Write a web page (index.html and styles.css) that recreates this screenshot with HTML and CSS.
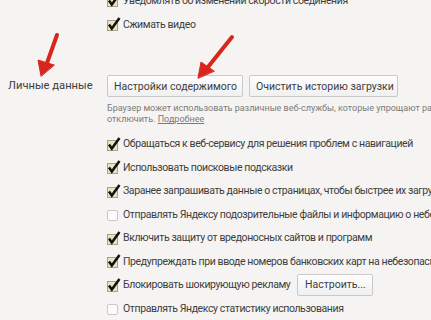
FILE: index.html
```html
<!DOCTYPE html>
<html lang="ru">
<head>
    <meta charset="UTF-8">
    <title>Настройки</title>
    <link rel="stylesheet" href="styles.css">
</head>
<body>
    <div class="page">
        <div class="section">
            <div class="label"></div>
            <div class="content">
                <div class="check-row"><span class="box checked"></span>Уведомлять об изменении скорости соединения</div>
                <div class="check-row"><span class="box checked"></span>Сжимать видео</div>
            </div>
        </div>

        <div class="section personal">
            <div class="label">Личные данные</div>
            <div class="content">
                <div class="buttons">
                    <button class="btn">Настройки содержимого</button>
                    <button class="btn">Очистить историю загрузки</button>
                </div>
                <p class="hint">Браузер может использовать различные веб-службы, которые упрощают работу в интернете. При желании эти службы можно<br>отключить. <a href="#">Подробнее</a></p>
                <div class="check-row"><span class="box checked"></span>Обращаться к веб-сервису для решения проблем с навигацией</div>
                <div class="check-row"><span class="box checked"></span>Использовать поисковые подсказки</div>
                <div class="check-row"><span class="box checked"></span>Заранее запрашивать данные о страницах, чтобы быстрее их загружать</div>
                <div class="check-row"><span class="box"></span>Отправлять Яндексу подозрительные файлы и информацию о небезопасных сайтах</div>
                <div class="check-row"><span class="box checked"></span>Включить защиту от вредоносных сайтов и программ</div>
                <div class="check-row"><span class="box checked"></span>Предупреждать при вводе номеров банковских карт на небезопасных сайтах</div>
                <div class="check-row"><span class="box checked"></span>Блокировать шокирующую рекламу <button class="btn small">Настроить...</button></div>
                <div class="check-row"><span class="box"></span>Отправлять Яндексу статистику использования</div>
            </div>
        </div>
    </div>

    <!-- красные стрелки поверх скриншота -->
    <svg class="arrows" width="431" height="320" viewBox="0 0 431 320">
        <g fill="#d8261c" stroke="#d8261c" stroke-linecap="round">
            <line x1="57" y1="35" x2="47" y2="63" stroke-width="4"/>
            <polygon points="41,76 38,60 54,65" stroke-width="1"/>
            <line x1="232" y1="37" x2="208" y2="67" stroke-width="4"/>
            <polygon points="198,78 201,62 214,71" stroke-width="1"/>
        </g>
    </svg>
</body>
</html>
```

FILE: styles.css
```css
body {
    margin: 0;
    background: #f5f4f2;
    font-family: Roboto, "Noto Sans", Arial, sans-serif;
    color: #3d3d3d;
    font-size: 10.5px;
    overflow: hidden;
    white-space: nowrap;
}
.page {
    margin-top: -12px;
}
.section {
    display: flex;
}
.label {
    width: 99px;
    padding-left: 8px;
    flex-shrink: 0;
}
.personal {
    margin-top: 39px;
}
.personal .label {
    padding-top: 3px;
    line-height: 16px;
    font-size: 11.2px;
}
.content {
    flex: 1;
}
.check-row {
    display: flex;
    align-items: center;
    height: 24px;
    letter-spacing: -0.4px;
}
.personal .check-row {
    height: 23.5px;
}
.box {
    width: 14px;
    height: 14px;
    margin-right: 2px;
    flex-shrink: 0;
    background: url("data:image/svg+xml;utf8,<svg xmlns='http://www.w3.org/2000/svg' viewBox='0 0 14 14'><rect x='0.5' y='3.5' width='10' height='10' rx='1.5' fill='%23fbfbfb' stroke='%23c9c9c9'/></svg>") no-repeat;
}
.box.checked {
    background: url("data:image/svg+xml;utf8,<svg xmlns='http://www.w3.org/2000/svg' viewBox='0 0 14 14'><rect x='0.5' y='3.5' width='10' height='10' fill='%23e9e3c2' stroke='%23a8a282'/><path d='M2 7.5 L4.8 11.5 L12.5 1' fill='none' stroke='%23111' stroke-width='2.5'/></svg>") no-repeat;
}
.buttons {
    display: flex;
    gap: 6px;
}
.btn {
    font-family: inherit;
    font-size: 10.5px;
    letter-spacing: 0;
    color: #3d3d3d;
    height: 22px;
    padding: 0 6px;
    border: 1px solid #c9c9c9;
    border-radius: 2px;
    background: linear-gradient(#fefefe, #f0f0f0);
}
.buttons .btn:first-child {
    width: 136px;
}
.buttons .btn:last-child {
    width: 149px;
}
.btn.small {
    margin-left: 7px;
    width: 76px;
}
.hint {
    margin: 6px 0 7px;
    font-size: 9px;
    line-height: 11px;
    color: #7a7a7a;
}
.hint a {
    color: #7a7a7a;
}
.arrows {
    position: absolute;
    left: 0;
    top: 0;
    pointer-events: none;
}
```
